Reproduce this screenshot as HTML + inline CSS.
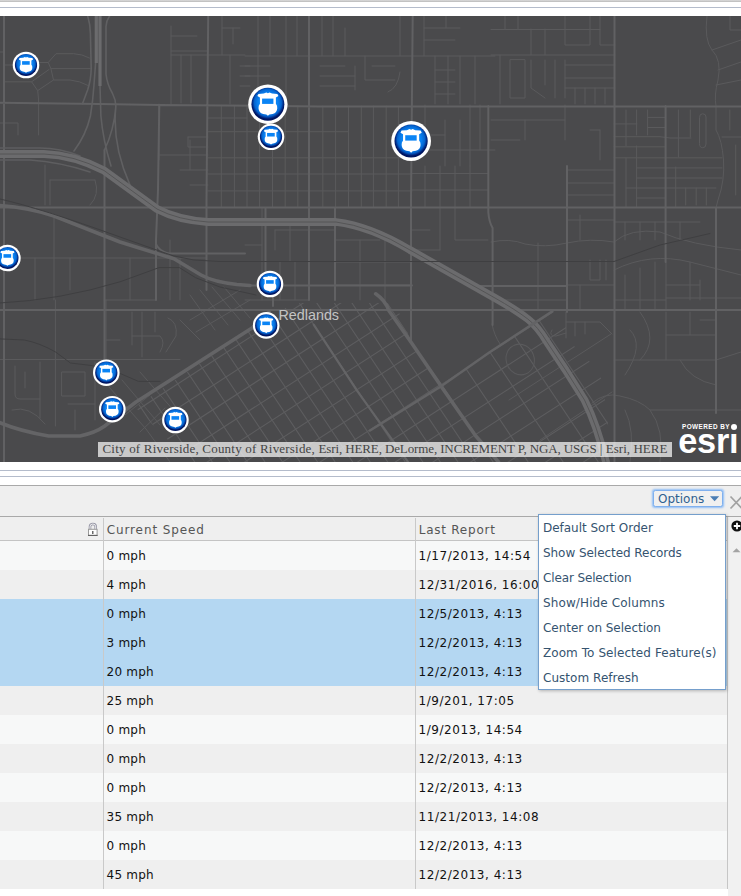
<!DOCTYPE html>
<html>
<head>
<meta charset="utf-8">
<title>Operations View</title>
<style>
html,body{margin:0;padding:0;}
body{width:741px;height:896px;overflow:hidden;background:#fff;position:relative;font-family:"DejaVu Sans","Liberation Sans",sans-serif;font-size:12px;}
.abs{position:absolute;}
#topbar{left:0;top:0;width:741px;height:2px;background:linear-gradient(#dcdcdc,#b9b9b9);}
#topline{left:0;top:7px;width:741px;height:1px;background:#b4bccb;}
#map{left:0;top:16px;width:741px;height:446px;background:#4a4a4c;overflow:hidden;}
#map svg{position:absolute;left:0;top:0;}
#attr{left:98px;top:426px;height:14.800px;line-height:14px;background:rgba(255,255,255,0.7);color:#444;font-family:"Liberation Serif",serif;font-size:13px;letter-spacing:0.030px;white-space:nowrap;padding:0 4.400px 0 4.500px;}
#line1{left:0;top:470px;width:741px;height:1px;background:#b4bccb;}
#line2{left:0;top:476px;width:741px;height:1px;background:#b4bccb;}
#panel{left:0;top:485px;width:741px;height:404px;background:#efefef;border-top:1px solid #a9a9a9;box-sizing:border-box;}
#hdr{left:0;top:516px;width:741px;height:25px;box-sizing:border-box;border-top:1px solid #a9a9a9;border-bottom:1px solid #c4c4c4;background:#efefef;color:#555;}
.coldiv{top:518px;width:1px;height:371px;background:#c9c9c9;}
.row{left:0;width:727px;height:29px;line-height:31px;color:#111;}
.row span{position:absolute;top:0;}
.odd{background:#f7f8f8;}
.even{background:#efefef;}
.sel{background:#b4d7f2;}
.c1{left:106.600px;letter-spacing:0.200px;}
.c2{left:418.600px;letter-spacing:0.540px;}
#menu{left:538px;top:514px;width:188px;height:176px;box-sizing:border-box;border:1px solid #759fcc;background:#fff;box-shadow:1px 1px 3px rgba(0,0,0,0.25);color:#35536f;}
#menu div{position:absolute;left:4px;height:25px;line-height:25px;white-space:nowrap;}
#opt{left:653px;top:489.500px;width:70px;height:17px;box-sizing:border-box;border:1px solid #7fb0ee;border-radius:2.500px;box-shadow:0 0 2px 0.500px #8fbdf6;color:#2f5f8f;line-height:16.600px;padding-left:4px;letter-spacing:0;background:#f0f0f0;}
#vtrack{left:728px;top:517px;width:13px;height:379px;background:#f1f1f1;}
#vline{left:727px;top:517px;width:1px;height:372px;background:#c6c6c6;}
</style>
</head>
<body>
<div id="topbar" class="abs"></div>
<div id="topline" class="abs"></div>

<div id="map" class="abs">
<svg width="741" height="446" viewBox="0 16 741 446">
<!--ROADS-->
<defs>
<clipPath id="cg1"><path d="M135 407L250 330L262 316L300 303L395 303L412 343L498 462L190 462Z"/></clipPath>
<clipPath id="cg2"><path d="M432 390L510 340L552 312L566 312L566 338L600 372L606 405L612 462L498 462L445 392Z"/></clipPath>
</defs>
<g fill="none" stroke-linecap="round" stroke-linejoin="round">
<g stroke="#5a5a5c" stroke-width="1">
<!-- top-left area -->
<path d="M171 26V104M171 36H197M171 51H208M181 55V103M191 55V103M171 55H208M222 16V55M222 28H240M233 28V44M208 55H245M230 55V104M240 66H250M240 76H250M240 86H250"/>
<path d="M4 65H13M37.700 62.500H48.200L56 53.700H73.700Q82 54 89.500 58M48.200 62.500L50.900 68.600H90.400M50.900 68.600L53.500 80H70Q80 81 87.700 85.300M53.500 80L37.700 90.600L31.600 81.800H4M31.600 81.800L49 69.500M37.700 90.600L38.600 100V135M0 123H18V135M0 52H4"/>
<path d="M159 104V160M159 155H208M188 137H208M188 137V147H208M208 118H247"/>
<!-- top-middle -->
<path d="M245 56H495M286 16V104M297 16V56M258 16V56M270 16V56M245 66H270M245 76H270M258 56V104M322 16V56M333 16V56M345 28V56M400 16V56M424 16V56M424 28H460M424 40H455M446 16V28"/>
<path d="M221.3 106V207M234.4 106V207M247 106V207M259.6 106V207M272.5 106V207M285.2 106V207M297.8 106V207M322.8 106V207M335.6 106V207M348.5 106V207M361.3 106V207M373.4 106V207M386.2 106V207M398.4 106V207M208 131.700H348M208 157.800H412M208 174H412M208 190.900H412"/>
<path d="M320 66H345M320 76H355M320 86H355M355 66V90M365 56V80H395M372 66H395M400 72Q398 88 388 92M435 56V104M448 56V104M460 56V104M475 56V104M435 70H455M435 82H455M435 94H455"/>
<path d="M425 105V135H445M445 120V166M460 120V166M425 150H495M470 105V166M480 105V150"/>
<!-- top-right -->
<path d="M491 29.500H600M491 55H615M505 16V29M518 16V29M531 29V55M545 29V55M565 16V45H590V29M590 16V29M600 16V45H615M500 55V104M525 60V98H510V60ZM531 60V88L545 98M545 60V85M555 60V98M565 60V98M565 65H615M565 78H615M565 88H615M575 88V104M585 88V104M595 88V104M605 88V104"/>
<path d="M491 120H565M565 105V140M491 140H520M525 120V140M600 130V160M590 130H600M614 157.800H722M614 136.700H660L670 138H691M614 146.800H665M614 123.900H637M637 167.900H722M637 178H722M626 188H716M637 198H665M626 110V146M626 158V207M636.600 110V135M636.600 146V207M647.600 110V135M647.600 117.400H665M647.600 127.500H665M678.400 110V157M690.300 110V137M699.500 117Q699.500 113.800 702.700 113.800Q706 113.800 706 117V144Q706 147.700 702.700 147.700Q699.500 147.700 699.500 144ZM675.700 167V207M685.700 188V205M696.200 188V205M706.300 188V205M729.800 110V130M735.700 145V195M722 137H741"/>
<path d="M707 16Q704 40 712 50Q722 60 718 80Q714 95 716 106V130Q722 140 723.500 160T718 200L716 208M712 50L741 40M718 70L741 62M716 85L741 80M730 16V30H741"/>
<!-- middle-left -->
<path d="M45 165V205M50 180H95M50 180V205M95 180Q100 195 90 205M180 170H208M190 140V170M190 185H208"/>
<path d="M20 258H206M54 216V300M35 258V300M70 258V290M130 258V300M170 240V300M104 300H156M180 258V300"/>
<!-- middle -->

<path d="M412 173.500H488M412 190H488M425 166V207M440 166V207M455 166V207M470 166V207"/>
<path d="M262 208V300M275 230H335M275 230V250M290 222V261M335 208V300M335 240H380M335 262H412M335 285H412M360 240V300M385 240V300M412 250H440M440 208V250M412 230H430M455 208V240H488"/>
<path d="M245 245H262M245 300H309M280 262V300M295 262V300"/>
<!-- middle-right -->
<path d="M567 170H614M567 183H614M567 195H614"/>
<path d="M491 242Q510 238 525 244Q545 248 567 243Q590 238 614 242Q630 228 660 232Q690 245 741 250M538 243V310M567 220H614M580 215V240M590 260V280H600V260M606 260V280M614 222H700M625 222V240M640 222V240M655 222V240M680 222V240M614 270Q650 252 690 262L741 275M625 275V310M640 268V310M655 262V310M666 262V310M690 262V300M700 280V300M666 285H700M666 298H741M614 300H666"/>
<path d="M491 300H567M567 285H614M580 285V310"/>
</g>
<g stroke="#5a5a5c" stroke-width="1">
<path d="M0 359.500H180M55.400 300V426M106 300V360M15 366V394Q15 399 20 399H40M25 372V388M40 362V418M12 410Q30 405 45 424M62 372H85V396H62ZM68 404H95M95 362V420M75 410V430M132 312V345M142 312V357M155 312V332M132 336H160Q166 342 160 352M120 340H106M168 318Q178 322 176 336L166 352M180 320L200 340M109 387L146 429L170 462M122 380L160 425M140 372L175 412M125 415L150 395M140 432L165 408"/>
</g>
<g stroke="#5d5d5f" stroke-width="1.100" clip-path="url(#cg1)"><path d="M15.9 298.9L293.2 714.9 M28.1 291L305.5 707 M40.4 283.1L317.7 699.1 M52.7 275.2L330 691.2 M64.9 267.3L342.3 683.3 M77.2 259.3L354.5 675.4 M89.5 251.4L366.8 667.5 M101.7 243.5L379.1 659.5 M114 235.6L391.4 651.6 M126.3 227.7L403.6 643.7 M138.5 219.8L415.9 635.8 M150.8 211.9L428.2 627.9 M163.1 203.9L440.4 620 M175.4 196L452.7 612.1 M187.6 188.1L465 604.1 M199.9 180.2L477.2 596.2 M212.2 172.3L489.5 588.3 M224.4 164.4L501.8 580.4 M236.7 156.5L514 572.5 M249 148.5L526.3 564.6 M261.2 140.6L538.6 556.7 M273.5 132.7L550.9 548.7 M285.8 124.8L563.1 540.8 M298 116.9L575.4 532.9 M310.3 109L587.7 525 M322.6 101.1L599.9 517.1 M334.9 93.2L612.2 509.2 M347.1 85.2L624.5 501.3 M359.4 77.3L636.7 493.4 M371.7 69.4L649 485.4 M383.9 61.5L661.3 477.5 M396.2 53.6L673.5 469.6 M408.5 45.7L685.8 461.7 M420.7 37.8L698.1 453.8 M433 29.8L710.4 445.9 M445.3 21.9L722.6 438 M457.5 14L734.9 430 M469.8 6.1L747.2 422.1"/><path d="M-19.5 365.5L568.7 -13.9 M-8.2 382.5L580 3.1 M3.1 399.5L591.3 20 M14.4 416.4L602.7 37 M25.7 433.4L614 54 M37 450.4L625.3 71 M48.4 467.4L636.6 87.9 M59.7 484.3L647.9 104.9 M71 501.3L659.2 121.9 M82.3 518.3L670.6 138.9 M93.6 535.3L681.9 155.8 M104.9 552.2L693.2 172.8 M116.3 569.2L704.5 189.8 M127.6 586.2L715.8 206.8 M138.9 603.2L727.1 223.7 M150.2 620.1L738.5 240.7 M161.5 637.1L749.8 257.7 M172.8 654.1L761.1 274.7 M184.2 671L772.4 291.6 M195.5 688L783.7 308.6 M206.8 705L795 325.6 M218.1 722L806.3 342.5"/></g>
<g stroke="#5d5d5f" stroke-width="1.100" clip-path="url(#cg2)"><path d="M28.1 291L305.5 707 M52.7 275.2L330 691.2 M77.2 259.3L354.5 675.4 M101.7 243.5L379.1 659.5 M126.3 227.7L403.6 643.7 M150.8 211.9L428.2 627.9 M175.4 196L452.7 612.1 M199.9 180.2L477.2 596.2 M224.4 164.4L501.8 580.4 M249 148.5L526.3 564.6 M273.5 132.7L550.9 548.7 M298 116.9L575.4 532.9 M322.6 101.1L599.9 517.1 M347.1 85.2L624.5 501.3 M371.7 69.4L649 485.4 M396.2 53.6L673.5 469.6 M420.7 37.8L698.1 453.8 M445.3 21.9L722.6 438 M469.8 6.1L747.2 422.1"/><path d="M-19.5 365.5L568.7 -13.9 M-8.2 382.5L580 3.1 M3.1 399.5L591.3 20 M14.4 416.4L602.7 37 M25.7 433.4L614 54 M37 450.4L625.3 71 M48.4 467.4L636.6 87.9 M59.7 484.3L647.9 104.9 M71 501.3L659.2 121.9 M82.3 518.3L670.6 138.9 M93.6 535.3L681.9 155.8 M104.9 552.2L693.2 172.8 M116.3 569.2L704.5 189.8 M127.6 586.2L715.8 206.8 M138.9 603.2L727.1 223.7 M150.2 620.1L738.5 240.7 M161.5 637.1L749.8 257.7 M172.8 654.1L761.1 274.7 M184.2 671L772.4 291.6 M195.5 688L783.7 308.6 M206.8 705L795 325.6 M218.1 722L806.3 342.5"/></g>
<g stroke="#5a5a5c" stroke-width="1"><path d="M190 295L215 330M200 290L228 325M212 287L240 320M190 320L240 290M196 332L250 300M224 287L250 318"/></g>
<!-- lower-right extra -->
<g stroke="#5a5a5c" stroke-width="1">
<ellipse cx="520.200" cy="359.500" rx="14" ry="15.500" transform="rotate(-20 520.200 359.500)"/>
<path d="M492 324Q494 335 500 344M566 312V338M552 330Q548 336 556 336L566 333M575 322V336M585 322V334M566 322H600L612 334"/>
<path d="M614 360H716M666 312V360M666 335H716M690 312V335M640 312Q660 340 640 360M630 330Q645 345 625 375M716 360L741 352M680 360Q690 380 716 385M716 312V413M700 320H716V335"/>
<path d="M592 403Q605 392 620 396Q640 400 650 410H741M650 410Q665 430 660 462M625 410Q635 430 630 462M509 400L611 334M540 440L612 392"/>
</g>
<!-- major roads -->
<g stroke="#616163" stroke-width="2">
<path d="M0 102.800L100 104L160 105L320 106.400H741M0 207.500H741M4 16V462M309 16V300M412.700 16L411 200V341M614.500 16V462M208.200 16L206.500 200V290M488.300 106V212Q489 222 492.600 228V325M104.500 150V360M159.300 105L158 190L156 240V300M567 166V312M665.600 106V262M716 208V413M335 208V300"/>
<path d="M0 310H741M245 285.500H412M480 286H567M168 253.400H245"/>
<path d="M156 244Q158 250 168 253.400M265.500 208V270Q268 280 273 290V306"/>
</g>
<!-- ramps -->
<g stroke="#606062" stroke-width="1.600">
<path d="M87.700 16Q90.400 25 90.400 33.500L91.200 68.600Q91 80 87.700 89.700L82.500 103.700M109.600 16Q106 21 106 26.500V74Q107 84 112.300 93Q116 100 115.800 107Q114 130 104.500 150M95.600 63L93.900 86Q93 100 90.400 116Q86 135 74 151M100 86L100.900 116Q103 140 111 166M115.800 107Q112 145 130 185"/>
</g>
<g stroke="#5e5e60" stroke-width="1.500"><path d="M0 148H40Q60 148 80 156M0 160H30Q60 162 90 172"/></g>
<!-- Freeways -->
<g stroke="#6b6b6d" stroke-width="7.800">
<path d="M96.300 16V63" stroke-width="3.200" stroke-linecap="butt"/><path d="M100 16V86" stroke-width="3.200" stroke-linecap="butt"/>
<path d="M0 154H44Q74 155 104 170.500L157 209Q178 220 208 222H336Q370 226 410 250L495 298Q515 309.300 527.800 319Q537.800 326.600 546.700 341.600L565.600 370L584.500 400Q597 425 606 462"/>
</g>
<g stroke="#525254" stroke-width="0.900">
<path d="M0 154H44Q74 155 104 170.500L157 209Q178 220 208 222H336Q370 226 410 250L495 298Q515 309.300 527.800 319Q537.800 326.600 546.700 341.600L565.600 370L584.500 400Q597 425 606 462"/>
</g>
<!-- large arterial roads -->
<g stroke="#646466" stroke-width="3.600">
<path d="M0 205.500Q30 208 54 216L120 242L174 258.800L201 275Q214 282 237 284.500L250 285.500"/>
<path d="M0 422.700Q20 431 48.600 436L80 436Q95 433 104.400 426.300L136 402L180 374L252 328L269 312"/>
<path d="M375.700 293.800Q385 300 389 310.800L411.600 343L443.700 390L475.800 436L498.500 462"/>
<path d="M313.700 324.600L357 390.700L396.400 445.600L408 462" stroke-width="2.200"/>
</g>
<g stroke="#636365" stroke-width="2.600">
<path d="M370 430.500L440 387L490 352L552.300 311.300"/>
</g>
<!-- railroads -->
<g stroke="#3f3f41" stroke-width="1">
<path d="M0 199Q40 208 120 237L160.500 251.400L174 256L194 260L220 261.500H614L660 245L710 233.500"/>
<path d="M0 303Q60 300 120 281.800L159 267.600H179.400L195.600 277.700L220 287L256 295"/>
<path d="M0 338.900L24.300 340Q40 343 55.900 352.200L70.400 363L92.300 365.600L121.400 374L138.500 381.400H160"/>
</g>
</g>
<!--MARKERS-->
<defs>
<radialGradient id="mg" cx="50%" cy="45%" r="50%">
<stop offset="0" stop-color="#1090ff"/><stop offset="0.6" stop-color="#0a82f2"/><stop offset="0.82" stop-color="#0565d0"/><stop offset="0.94" stop-color="#012c88"/><stop offset="1" stop-color="#001560"/>
</radialGradient>
<g id="mk">
<circle r="20" fill="#fff"/>
<circle r="16.700" fill="url(#mg)"/>
<path d="M-10.700 -8.300L-9.600 -10.500L-4.200 -10.900L-1.600 -12L0 -11.300L1.600 -12L4.200 -10.900L9.600 -10.500L10.700 -8.300L8.100 -6.900L8.100 -0.500Q9.700 1.200 9.500 4Q9.300 8.700 4.800 9.800L1.600 10.400L0 11.700L-1.600 10.400L-4.800 9.800Q-9.300 8.700 -9.500 4Q-9.700 1.200 -8.100 -0.500L-8.100 -6.900Z" fill="#fff"/>
<rect x="-5.900" y="-5.800" width="11.500" height="5.400" fill="#0a84f5"/>
</g>
</defs>
<text x="278.500" y="319.500" font-family="'Liberation Sans',sans-serif" font-size="14.500" fill="#c4c4c4" textLength="60.500" lengthAdjust="spacingAndGlyphs">Redlands</text>
<use href="#mk" transform="translate(26 65) scale(0.665)"/>
<use href="#mk" transform="translate(271 136.800) scale(0.665)"/>
<use href="#mk" transform="translate(267.900 104.300) scale(0.985)"/>
<use href="#mk" transform="translate(411.100 141) scale(0.995)"/>
<use href="#mk" transform="translate(7.400 258) scale(0.665)"/>
<use href="#mk" transform="translate(270 284) scale(0.665)"/>
<use href="#mk" transform="translate(266.200 325.400) scale(0.665)"/>
<use href="#mk" transform="translate(106.300 372.700) scale(0.665)"/>
<use href="#mk" transform="translate(112.300 409.200) scale(0.665)"/>
<use href="#mk" transform="translate(175.400 420) scale(0.665)"/>

</svg>
<div id="attr" class="abs"><span style="letter-spacing:0.200px">City of Riverside, County of Riverside, </span><span style="letter-spacing:-0.120px">Esri, HERE, DeLorme, INCREMENT P, NGA, USGS</span> | Esri, HERE</div>
<div class="abs" style="left:682px;top:406.500px;font:bold 6.400px/8px 'Liberation Sans',sans-serif;color:#fff;white-space:nowrap;letter-spacing:0.430px" id="pby">POWERED BY</div>
<div class="abs" style="left:678.200px;top:405.200px;font:bold 34.300px/40px 'Liberation Sans',sans-serif;color:#fff;white-space:nowrap;letter-spacing:-0.200px" id="esri">esrı</div>
<div class="abs" style="left:730.700px;top:407.600px;width:6.600px;height:6.600px;border-radius:50%;background:#fff"></div>

</div>

<div id="line1" class="abs"></div>
<div id="line2" class="abs"></div>
<div id="panel" class="abs"></div>
<div id="opt" class="abs">Options</div>
<svg class="abs" style="left:708px;top:494px" width="14" height="10"><path d="M2 2.200L11.200 2.200L6.600 7.300Z" fill="#4a7db4"/></svg>
<svg class="abs" style="left:729px;top:494px" width="12" height="16"><path d="M1.500 2.500L13 14.500M13 2.500L1.500 14.500" stroke="#a2a2a2" stroke-width="1.700" fill="none"/></svg>

<div id="hdr" class="abs"><span class="abs" style="left:106.700px;top:0;line-height:26px;letter-spacing:0.890px">Current Speed</span><span class="abs" style="left:418.700px;top:0;line-height:26px;letter-spacing:0.760px">Last Report</span></div>

<div class="row odd abs" style="top:541px"><span class="c1">0 mph</span><span class="c2">1/17/2013, 14:54</span></div>
<div class="row even abs" style="top:570px"><span class="c1">4 mph</span><span class="c2">12/31/2016, 16:00</span></div>
<div class="row sel abs" style="top:599px"><span class="c1">0 mph</span><span class="c2">12/5/2013, 4:13</span></div>
<div class="row sel abs" style="top:628px"><span class="c1">3 mph</span><span class="c2">12/2/2013, 4:13</span></div>
<div class="row sel abs" style="top:657px"><span class="c1">20 mph</span><span class="c2">12/2/2013, 4:13</span></div>
<div class="row even abs" style="top:686px"><span class="c1">25 mph</span><span class="c2">1/9/201, 17:05</span></div>
<div class="row odd abs" style="top:715px"><span class="c1">0 mph</span><span class="c2">1/9/2013, 14:54</span></div>
<div class="row even abs" style="top:744px"><span class="c1">0 mph</span><span class="c2">12/2/2013, 4:13</span></div>
<div class="row odd abs" style="top:773px"><span class="c1">0 mph</span><span class="c2">12/2/2013, 4:13</span></div>
<div class="row even abs" style="top:802px"><span class="c1">35 mph</span><span class="c2">11/21/2013, 14:08</span></div>
<div class="row odd abs" style="top:831px"><span class="c1">0 mph</span><span class="c2">12/2/2013, 4:13</span></div>
<div class="row even abs" style="top:860px"><span class="c1">45 mph</span><span class="c2">12/2/2013, 4:13</span></div>

<div class="coldiv abs" style="left:103px"></div>
<div class="coldiv abs" style="left:415px"></div>
<div id="vtrack" class="abs"></div><div id="vline" class="abs"></div>
<svg class="abs" style="left:86px;top:521px" width="14" height="16"><path d="M4 8.300V5.800Q4 3 6.850 3Q9.700 3 9.700 5.800V8.300" fill="none" stroke="#9797a6" stroke-width="2.600"/><path d="M4 8.300V5.800Q4 3 6.850 3Q9.700 3 9.700 5.800V8.300" fill="none" stroke="#f6f6f6" stroke-width="0.900"/><rect x="2.500" y="8.300" width="8.600" height="6.100" fill="#fdfdfd" stroke="#9a9a9a" stroke-width="1"/><path d="M2 14.400H11.600" stroke="#5a5a5a" stroke-width="1"/><path d="M6.800 10V13" stroke="#444" stroke-width="1.200"/></svg>
<svg class="abs" style="left:730px;top:519px" width="12" height="14"><circle cx="7" cy="7" r="5.600" fill="#111"/><path d="M7 3.800V10.200M3.800 7H10.200" stroke="#fff" stroke-width="1.800"/></svg>
<svg class="abs" style="left:731px;top:546px" width="10" height="8"><path d="M1.500 6.200L5.500 2.200L9.500 6.200Z" fill="#a4a4a4"/></svg>


<div id="menu" class="abs">
<div style="top:0.5px;letter-spacing:-0.02px">Default Sort Order</div>
<div style="top:25.5px;letter-spacing:-0.05px">Show Selected Records</div>
<div style="top:50.5px;letter-spacing:-0.13px">Clear Selection</div>
<div style="top:75.5px;letter-spacing:0.12px">Show/Hide Columns</div>
<div style="top:100.5px;letter-spacing:-0.02px">Center on Selection</div>
<div style="top:125.5px;letter-spacing:0.07px">Zoom To Selected Feature(s)</div>
<div style="top:150.5px;letter-spacing:0.04px">Custom Refresh</div>
</div>
</body>
</html>
